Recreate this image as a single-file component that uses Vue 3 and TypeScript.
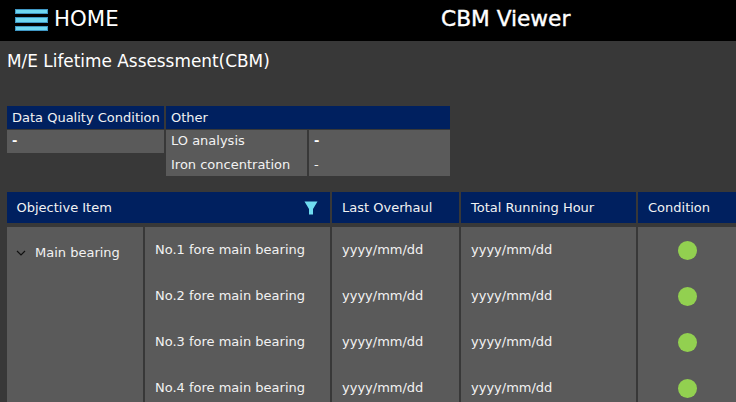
<script setup lang="ts">
const rows = [1, 2, 3, 4].map((n) => `No.${n} fore main bearing`)
</script>

<template>
  <div class="page">
    <header class="topbar">
      <div class="home">
        <div class="burger"><i></i><i></i><i></i></div>
        <span>HOME</span>
      </div>
      <div class="app-title">CBM Viewer</div>
    </header>
    <main class="content">
      <h1>M/E Lifetime Assessment(CBM)</h1>
      <section class="summary">
        <div class="quality">
          <div class="head">Data Quality Condition</div>
          <div class="cell single"><div class="lines"><span class="dash">-</span></div></div>
        </div>
        <div class="other">
          <div class="head span">Other</div>
          <div class="cell double"><div class="lines">LO analysis<br />Iron concentration</div></div>
          <div class="cell double"><div class="lines"><span class="dash">-</span><br />-</div></div>
        </div>
      </section>
      <section class="grid">
        <div class="th objective">
          <span>Objective Item</span>
          <svg width="14" height="14" viewBox="0 0 14 14"><path d="M0.5 0.5h13L9 8v5.5H5V8z" fill="#6fdcf0" /></svg>
        </div>
        <div class="th">Last Overhaul</div>
        <div class="th">Total Running Hour</div>
        <div class="th">Condition</div>
        <div class="group">
          <svg width="10" height="6" viewBox="0 0 10 6"><path d="M1 1l4 4 4-4" fill="none" stroke="#111" stroke-width="1.2" /></svg>
          <span>Main bearing</span>
        </div>
        <div class="col"><div v-for="r in rows" :key="r" class="row">{{ r }}</div></div>
        <div class="col"><div v-for="r in rows" :key="r" class="row">yyyy/mm/dd</div></div>
        <div class="col"><div v-for="r in rows" :key="r" class="row">yyyy/mm/dd</div></div>
        <div class="col"><div v-for="r in rows" :key="r" class="row center"><b class="dot"></b></div></div>
      </section>
    </main>
  </div>
</template>

<style scoped>
.page {
  width: 736px;
  height: 402px;
  overflow: hidden;
  background: #383838;
  color: #f2f2f2;
  font-family: "DejaVu Sans", sans-serif;
  font-size: 13px;
}
.topbar {
  height: 41px;
  background: #000;
  display: flex;
  align-items: center;
  position: relative;
}
.home {
  display: flex;
  align-items: center;
  gap: 6px;
  padding-left: 15px;
  font-size: 21.3px;
  color: #fff;
}
.home span {
  margin-top: -4px;
}
.burger {
  width: 33px;
  display: flex;
  flex-direction: column;
  gap: 3px;
  margin-top: -1.5px;
}
.burger i {
  display: block;
  height: 5.5px;
  background: #6fd6ee;
  border: 1px solid #3f97c4;
  box-sizing: border-box;
}
.app-title {
  position: absolute;
  left: 441px;
  top: 5px;
  font-size: 21.7px;
  line-height: 28px;
  color: #fff;
  -webkit-text-stroke: 0.4px #fff;
}
.content {
  padding: 0 0 0 7px;
}
h1 {
  margin: 0;
  padding-top: 8px;
  height: 57px;
  box-sizing: border-box;
  font-size: 16.9px;
  font-weight: 400;
  line-height: 24px;
  color: #fff;
}
.summary {
  margin-top: 8px;
  display: flex;
  gap: 2px;
  align-items: flex-start;
}
.quality {
  width: 157px;
}
.other {
  width: 284px;
  display: grid;
  grid-template-columns: 141px 141px;
  column-gap: 2px;
}
.head {
  height: 23px;
  line-height: 23px;
  padding-left: 5px;
  background: #00205f;
  margin-bottom: 1px;
  white-space: nowrap;
}
.span {
  grid-column: 1 / 3;
}
.cell {
  background: #5a5a5a;
  padding-left: 5px;
  display: flow-root;
}
.single {
  height: 23px;
}
.double {
  height: 46px;
}
.lines {
  line-height: 24px;
  margin-top: -1px;
}
.dash {
  font-weight: 700;
  color: #fff;
}
.grid {
  margin-top: 16px;
  display: grid;
  grid-template-columns: 136px 185px 127px 175px 98px;
  grid-template-rows: 31px auto;
  column-gap: 2px;
  row-gap: 4px;
}
.th {
  background: #00205f;
  display: flex;
  align-items: center;
  padding-left: 10px;
}
.objective {
  grid-column: 1 / 3;
  justify-content: space-between;
  padding-left: 9.5px;
  padding-right: 12px;
}
.group {
  background: #5a5a5a;
  display: flex;
  height: 175px;
  align-items: flex-start;
  padding: 16px 0 0 9px;
  box-sizing: border-box;
  gap: 9px;
}
.group svg {
  margin-top: 7px;
}
.group span {
  line-height: 20px;
}
.col {
  background: #5a5a5a;
  height: 175px;
  padding-left: 10px;
}
.row {
  height: 46px;
  line-height: 46px;
}
.center {
  display: flex;
  align-items: center;
  justify-content: center;
  padding-right: 10px;
}
.dot {
  width: 19px;
  height: 19px;
  border-radius: 50%;
  background: #92d050;
}
</style>
